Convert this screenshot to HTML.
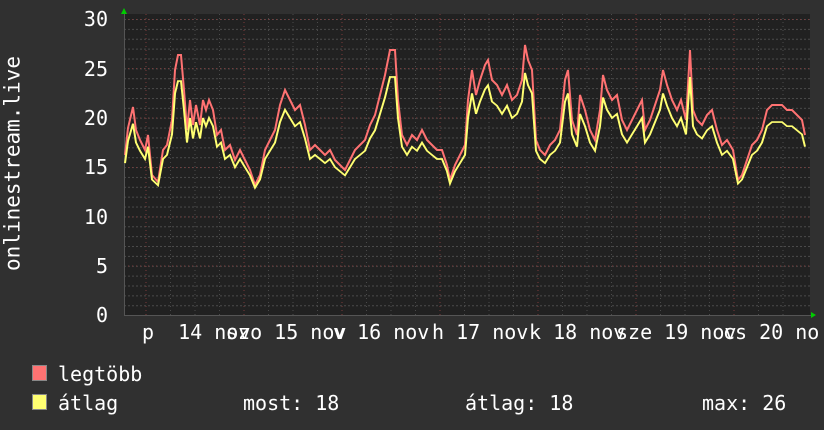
<!DOCTYPE html>
<html><head><meta charset="utf-8"><style>
html,body{margin:0;padding:0;background:#303030;}
body{width:824px;height:430px;position:relative;overflow:hidden;font-family:"DejaVu Sans Mono","Liberation Mono",monospace;color:#fff;font-size:18px;}
.t{position:absolute;white-space:pre;line-height:1;}
.yl{position:absolute;right:716px;width:40px;text-align:right;line-height:1;font-size:20px;}
</style></head><body>
<svg width="824" height="430" style="position:absolute;left:0;top:0">
<defs>
<pattern id="hmin" x="0" y="19" width="4" height="9.87" patternUnits="userSpaceOnUse"><rect x="0" y="0" width="2" height="1" fill="#4a4a4a"/></pattern>
</defs>
<rect x="124" y="14" width="686" height="302" fill="#212121"/>
<rect x="124" y="14" width="686" height="302" fill="url(#hmin)"/>
<g stroke="#4a4a4a" stroke-width="1" stroke-dasharray="1,3">
<line x1="170.5" y1="14" x2="170.5" y2="316"/><line x1="195" y1="14" x2="195" y2="316"/><line x1="219.5" y1="14" x2="219.5" y2="316"/>
<line x1="268.5" y1="14" x2="268.5" y2="316"/><line x1="293" y1="14" x2="293" y2="316"/><line x1="317.5" y1="14" x2="317.5" y2="316"/>
<line x1="366.5" y1="14" x2="366.5" y2="316"/><line x1="391" y1="14" x2="391" y2="316"/><line x1="415.5" y1="14" x2="415.5" y2="316"/>
<line x1="464.5" y1="14" x2="464.5" y2="316"/><line x1="489" y1="14" x2="489" y2="316"/><line x1="513.5" y1="14" x2="513.5" y2="316"/>
<line x1="562.5" y1="14" x2="562.5" y2="316"/><line x1="587" y1="14" x2="587" y2="316"/><line x1="611.5" y1="14" x2="611.5" y2="316"/>
<line x1="660.5" y1="14" x2="660.5" y2="316"/><line x1="685" y1="14" x2="685" y2="316"/><line x1="709.5" y1="14" x2="709.5" y2="316"/>
<line x1="758.5" y1="14" x2="758.5" y2="316"/><line x1="783" y1="14" x2="783" y2="316"/>
</g>
<g stroke="#7a3a3a" stroke-width="1" stroke-dasharray="1,3">
<line x1="146" y1="14" x2="146" y2="316"/><line x1="244" y1="14" x2="244" y2="316"/><line x1="342" y1="14" x2="342" y2="316"/><line x1="440" y1="14" x2="440" y2="316"/><line x1="538" y1="14" x2="538" y2="316"/><line x1="636" y1="14" x2="636" y2="316"/><line x1="734" y1="14" x2="734" y2="316"/>
<line x1="124" y1="19.5" x2="810" y2="19.5"/><line x1="124" y1="68.5" x2="810" y2="68.5"/><line x1="124" y1="118" x2="810" y2="118"/><line x1="124" y1="167.5" x2="810" y2="167.5"/><line x1="124" y1="217" x2="810" y2="217"/><line x1="124" y1="266" x2="810" y2="266"/>
</g>
<line x1="124" y1="315.5" x2="812" y2="315.5" stroke="#555"/>
<line x1="124.5" y1="12" x2="124.5" y2="316" stroke="#555"/>
<polygon points="121,14 127,14 124,8" fill="#00cc00"/>
<polygon points="811,312 811,318 816,315" fill="#00cc00"/>
<polyline fill="none" stroke="#ff7272" stroke-width="2" points="125,155 128,128 133,107 136,130 140,140 145,150 148,135 152,175 158,182 163,150 167,145 172,120 175,70 178,55 181,55 184,90 187,130 190,100 193,125 196,105 200,125 203,100 206,110 209,100 213,110 217,135 221,130 225,150 230,145 235,160 240,150 245,160 250,170 255,185 260,175 265,150 270,140 275,130 280,105 285,90 290,100 295,110 300,105 305,125 310,150 315,145 320,150 325,155 330,150 335,160 340,165 345,170 350,160 355,150 360,145 365,140 370,125 375,115 380,95 385,75 390,50 395,50 398,100 402,135 407,145 412,135 417,140 422,130 427,140 432,145 437,150 442,150 447,165 450,180 455,165 460,155 465,145 468,100 472,70 476,95 480,80 485,65 488,60 492,80 497,85 502,95 507,85 512,100 517,95 522,80 525,45 528,60 532,70 536,140 540,150 545,155 550,145 555,140 560,130 565,80 568,70 572,120 577,135 580,95 585,110 590,130 595,140 600,110 603,75 607,90 612,100 617,95 622,120 627,130 632,120 637,110 642,100 645,130 650,120 655,105 660,90 663,70 667,85 672,100 677,110 681,100 686,120 690,50 693,110 697,120 702,125 707,115 712,110 717,130 722,145 727,140 733,150 738,180 742,175 747,160 752,145 757,140 762,130 767,110 772,105 777,105 782,105 787,110 792,110 797,115 802,120 805,135"/>
<polyline transform="matrix(1,0,0,0.82,0,36)" fill="none" stroke="#ffff72" stroke-width="2" points="125,155 128,128 133,107 136,130 140,140 145,150 148,135 152,175 158,182 163,150 167,145 172,120 175,70 178,55 181,55 184,90 187,130 190,100 193,125 196,105 200,125 203,100 206,110 209,100 213,110 217,135 221,130 225,150 230,145 235,160 240,150 245,160 250,170 255,185 260,175 265,150 270,140 275,130 280,105 285,90 290,100 295,110 300,105 305,125 310,150 315,145 320,150 325,155 330,150 335,160 340,165 345,170 350,160 355,150 360,145 365,140 370,125 375,115 380,95 385,75 390,50 395,50 398,100 402,135 407,145 412,135 417,140 422,130 427,140 432,145 437,150 442,150 447,165 450,180 455,165 460,155 465,145 468,100 472,70 476,95 480,80 485,65 488,60 492,80 497,85 502,95 507,85 512,100 517,95 522,80 525,45 528,60 532,70 536,140 540,150 545,155 550,145 555,140 560,130 565,80 568,70 572,120 577,135 580,95 585,110 590,130 595,140 600,110 603,75 607,90 612,100 617,95 622,120 627,130 632,120 637,110 642,100 645,130 650,120 655,105 660,90 663,70 667,85 672,100 677,110 681,100 686,120 690,50 693,110 697,120 702,125 707,115 712,110 717,130 722,145 727,140 733,150 738,180 742,175 747,160 752,145 757,140 762,130 767,110 772,105 777,105 782,105 787,110 792,110 797,115 802,120 805,135"/>
</svg>
<div class="yl" style="top:9px">30</div>
<div class="yl" style="top:59px">25</div>
<div class="yl" style="top:108px">20</div>
<div class="yl" style="top:157px">15</div>
<div class="yl" style="top:207px">10</div>
<div class="yl" style="top:256px">5</div>
<div class="yl" style="top:305px">0</div>
<div class="t" style="left:-107px;top:153px;transform:rotate(-90deg);width:240px;text-align:center;font-size:21px">onlinestream.live</div>
<div class="t" style="top:322px;left:142px;font-size:20px">p  14 nov</div>
<div class="t" style="top:322px;left:226px;font-size:20px">szo 15 nov</div>
<div class="t" style="top:322px;left:333px;font-size:20px">v 16 nov</div>
<div class="t" style="top:322px;left:432px;font-size:20px">h 17 nov</div>
<div class="t" style="top:322px;left:529px;font-size:20px">k 18 nov</div>
<div class="t" style="top:322px;left:616px;font-size:20px">sze 19 nov</div>
<div class="t" style="top:322px;left:723px;font-size:20px">cs 20 no</div>
<div style="position:absolute;left:32px;top:365px;width:13px;height:14px;background:#ff7272;border:1px solid #888"></div>
<div style="position:absolute;left:32px;top:394px;width:13px;height:14px;background:#ffff72;border:1px solid #888"></div>
<div class="t" style="left:58px;top:364px;font-size:20px">legtöbb</div>
<div class="t" style="left:58px;top:393px;font-size:20px">átlag</div>
<div class="t" style="left:243px;top:393px;font-size:20px">most: 18</div>
<div class="t" style="left:465px;top:393px;font-size:20px">átlag: 18</div>
<div class="t" style="left:702px;top:393px;font-size:20px">max: 26</div>
</body></html>
